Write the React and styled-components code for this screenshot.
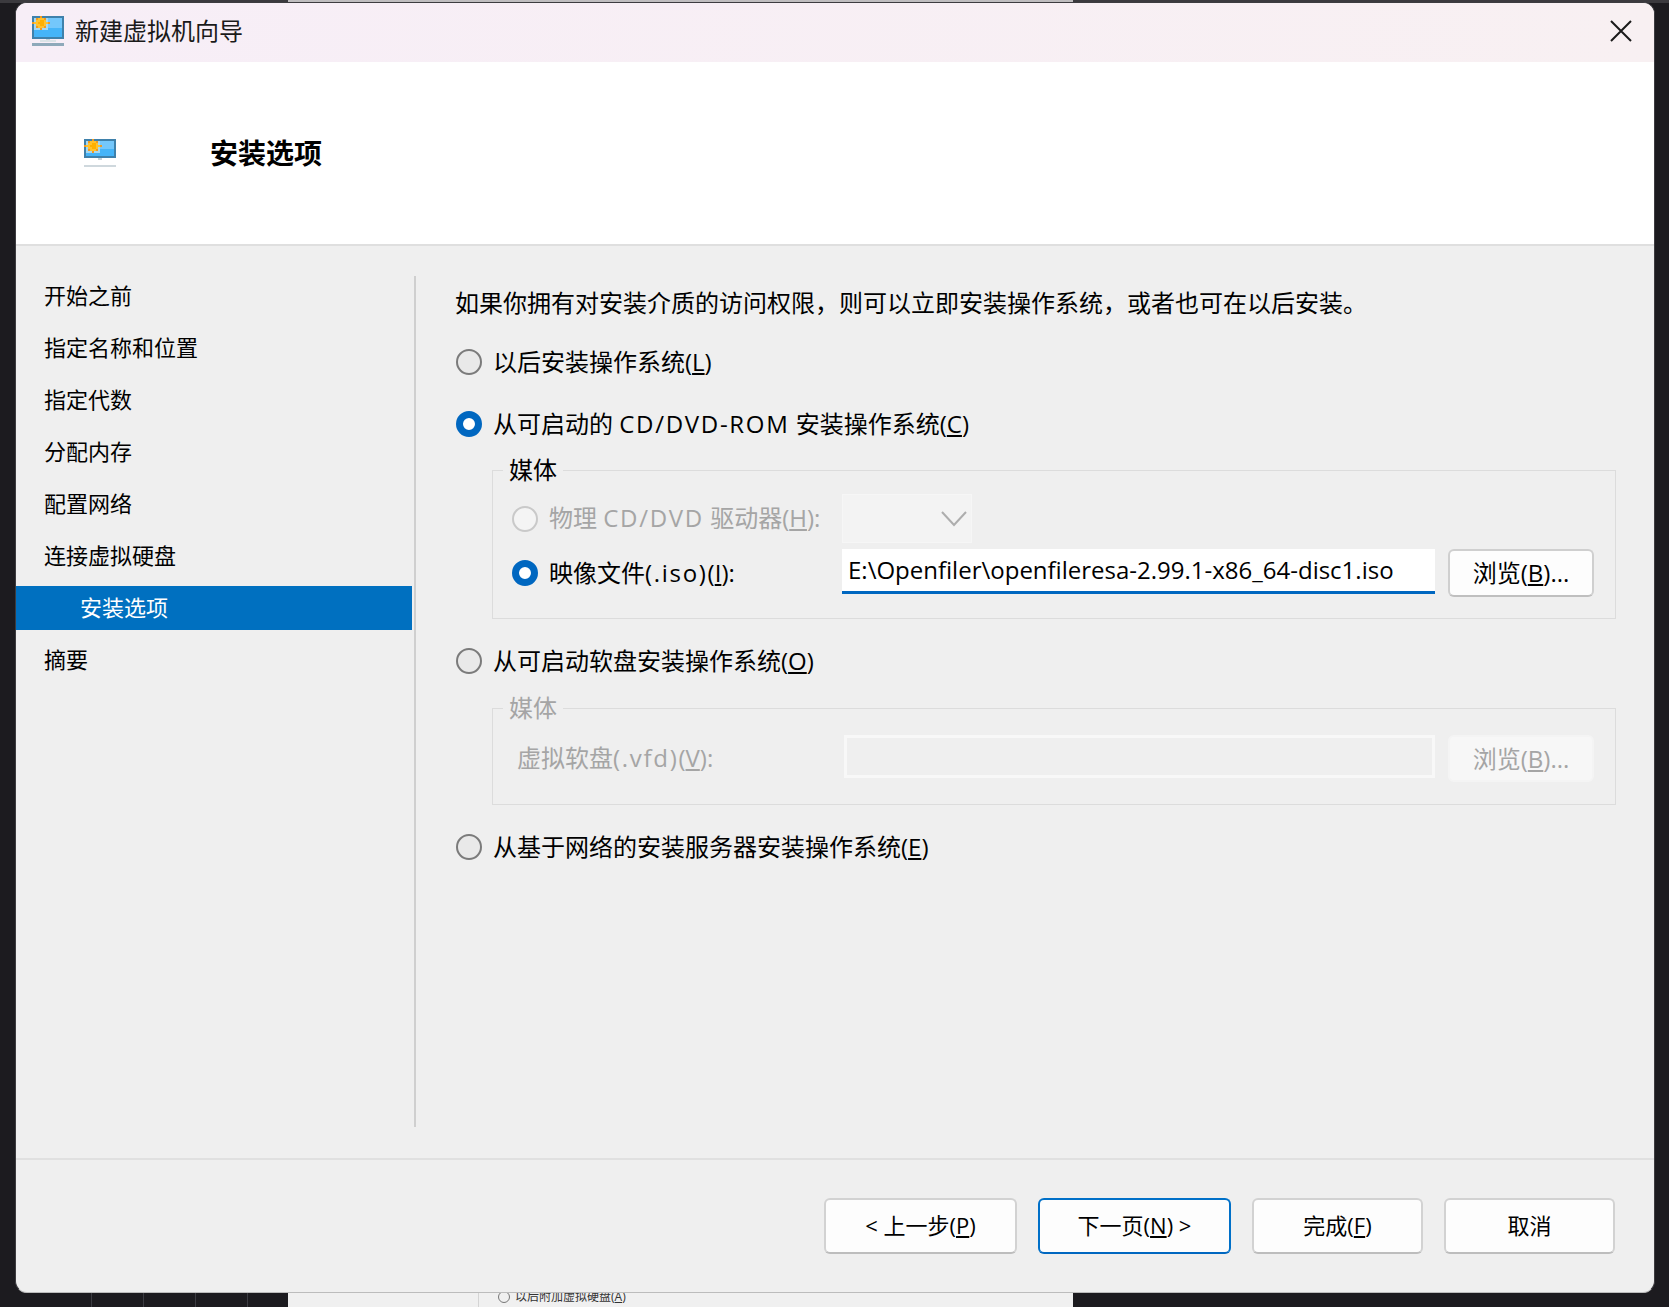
import React from "react";
import styled, { createGlobalStyle } from "styled-components";

const FONT = `"Open Sans", "Noto Sans CJK SC", sans-serif`;
const BLUE = "#0067c0";

const GlobalStyle = createGlobalStyle`
  html, body {
    margin: 0;
    padding: 0;
    background: #1c1b1f;
  }
  * {
    box-sizing: border-box;
  }
`;

const Page = styled.div`
  position: relative;
  width: 1669px;
  height: 1307px;
  overflow: hidden;
  background: #1c1b1f;
  font-family: ${FONT};
  color: #000;
`;

// what shows around the dialog: the desktop and the window behind it
const BehindTop = styled.div`
  position: absolute;
  top: 0;
  left: 0;
  right: 0;
  height: 3px;
  background: linear-gradient(
    to right,
    #3b3a3e 0,
    #3b3a3e 288px,
    #bfbdbf 288px,
    #bfbdbf 1073px,
    #3b3a3e 1073px
  );
`;

const BehindBottom = styled.div`
  position: absolute;
  left: 288px;
  top: 1293px;
  width: 785px;
  height: 14px;
  background: #f0f0f0;
  overflow: hidden;
`;

const BehindLine = styled.div`
  position: absolute;
  top: 0;
  left: 190px;
  width: 1px;
  height: 14px;
  background: #d4d4d4;
`;

const BehindOption = styled.div`
  position: absolute;
  top: -2px;
  left: 210px;
  display: flex;
  align-items: center;
  gap: 5px;
  font-size: 12px;
  line-height: 12px;
  color: #333;
`;

const BehindRadio = styled.span`
  width: 12px;
  height: 12px;
  border: 1px solid #777;
  border-radius: 50%;
`;

const GridLine = styled.div`
  position: absolute;
  left: ${(p) => p.$x}px;
  top: 1293px;
  width: 1px;
  height: 14px;
  background: #3c3c42;
`;

const Window = styled.div`
  position: relative;
  margin: 2px 0 0 15px;
  width: 1640px;
  height: 1291px;
  display: flex;
  flex-direction: column;
  border: 1px solid #3d3c40;
  border-bottom-color: #bcbcbc;
  border-radius: 12px;
  overflow: hidden;
  background: #efefef;
`;

const TitleBar = styled.div`
  height: 59px;
  flex: none;
  display: flex;
  align-items: center;
  padding: 0 22px 3px 16px;
  background: linear-gradient(to right, #f7eef7, #f8f0f2);
`;

const TitleText = styled.span`
  margin-left: 11px;
  font-size: 24px;
  line-height: 36px;
  color: #1a1a1a;
`;

const CloseButton = styled.div`
  margin-left: auto;
  display: flex;
`;

const Banner = styled.div`
  height: 184px;
  flex: none;
  display: flex;
  align-items: center;
  padding-left: 68px;
  background: #fff;
  border-bottom: 2px solid #dfdfdf;
`;

const BannerTitle = styled.h1`
  margin: 0 0 0 94px;
  font-size: 28px;
  line-height: 40px;
  font-weight: 700;
`;

const Body = styled.div`
  flex: 1;
  display: flex;
  min-height: 0;
`;

const Sidebar = styled.ul`
  width: 396px;
  flex: none;
  margin: 0;
  padding: 28px 0 0;
  list-style: none;
  display: flex;
  flex-direction: column;
  gap: 8px;
`;

const Step = styled.li`
  height: 44px;
  display: flex;
  align-items: center;
  padding-left: ${(p) => (p.$active ? 64 : 28)}px;
  padding-bottom: 4px;
  font-size: 22px;
  background: ${(p) => (p.$active ? "#0070c0" : "transparent")};
  color: ${(p) => (p.$active ? "#fff" : "#000")};
`;

const VLine = styled.div`
  width: 2px;
  flex: none;
  margin: 30px 0 31px 2px;
  background: #cfcfcf;
`;

const Content = styled.div`
  flex: none;
  width: 1161px;
  margin-left: 39px;
  padding-top: 39px;
`;

const Intro = styled.p`
  margin: 0;
  height: 36px;
  font-size: 24px;
  line-height: 36px;
`;

const Option = styled.label`
  display: flex;
  align-items: center;
  height: 36px;
  margin-top: ${(p) => p.$top}px;
  margin-left: ${(p) => p.$left || 0}px;
  font-size: 24px;
  color: ${(p) => (p.$disabled ? "#a5a5a5" : "#000")};
  white-space: pre;
`;

const Caption = styled.span`
  margin-bottom: 4px;
`;

const Latin = styled.span`
  letter-spacing: 1.7px;
`;

const Radio = styled.span`
  width: 26px;
  height: 26px;
  flex: none;
  margin-left: 1px;
  margin-right: 11px;
  border-radius: 50%;
  background: ${(p) =>
    p.$checked ? "#fff" : p.$disabled ? "#f4f4f4" : "#e9e9e9"};
  border: ${(p) =>
    p.$checked
      ? `7px solid ${BLUE}`
      : p.$disabled
      ? "2px solid #c9c9c9"
      : "2px solid #7b7b7b"};
`;

const Group = styled.div`
  position: relative;
  margin-top: ${(p) => p.$top}px;
  margin-left: 37px;
  width: 1124px;
  height: ${(p) => p.$height}px;
  padding: ${(p) => p.$pad}px 20px 0 0;
  border: 1px solid #dcdcdc;
`;

const Legend = styled.span`
  position: absolute;
  top: -19px;
  left: 10px;
  padding: 0 6px;
  font-size: 24px;
  line-height: 36px;
  background: #efefef;
  color: ${(p) => (p.$disabled ? "#a5a5a5" : "#000")};
`;

const FieldRow = styled.div`
  display: flex;
  align-items: center;
  height: ${(p) => p.$height}px;
  margin-bottom: ${(p) => p.$bottom || 0}px;
`;

const FieldLabel = styled(Option)`
  width: ${(p) => p.$width}px;
  flex: none;
  margin-top: 0;
`;

const Combo = styled.div`
  width: 130px;
  height: 49px;
  display: flex;
  align-items: center;
  justify-content: flex-end;
  padding-right: 3px;
  background: #f3f3f3;
  border: 1px solid #f6f6f6;
`;

const PathInput = styled.input`
  width: 593px;
  height: 45px;
  flex: none;
  padding: 0 0 2px 6px;
  border: 0;
  border-bottom: 3px solid ${BLUE};
  border-radius: 0;
  outline: none;
  background: #fff;
  font-family: ${FONT};
  font-size: 24px;
  color: #000;
  align-self: flex-start;
`;

const DisabledInput = styled.div`
  width: 591px;
  height: 43px;
  margin-left: 1px;
  flex: none;
  background: #efefef;
  border: 3px solid #f8f8f8;
  align-self: flex-start;
`;

const BrowseButton = styled.button`
  width: 146px;
  height: ${(p) => (p.disabled ? 47 : 48)}px;
  margin-left: 13px;
  flex: none;
  padding: 0 0 3px;
  align-self: flex-start;
  border: 2px solid ${(p) => (p.disabled ? "#f4f4f4" : "#cfcfcf")};
  border-bottom-color: ${(p) => (p.disabled ? "#f4f4f4" : "#bfbfbf")};
  border-radius: 6px;
  background: ${(p) => (p.disabled ? "#f7f7f7" : "#fdfdfd")};
  color: ${(p) => (p.disabled ? "#a5a5a5" : "#000")};
  font-family: ${FONT};
  font-size: 24px;
`;

const Footer = styled.div`
  height: 134px;
  flex: none;
  display: flex;
  align-items: flex-start;
  justify-content: flex-end;
  gap: 21px;
  padding: 38px 39px 0 0;
  border-top: 2px solid #e0e0e0;
`;

const WizardButton = styled.button`
  width: ${(p) => p.$width}px;
  height: 56px;
  padding: 0 0 4px;
  border: 2px solid ${(p) => (p.$primary ? "#0070c8" : "#d2d2d2")};
  border-bottom-color: ${(p) => (p.$primary ? "#0067c0" : "#bdbdbd")};
  border-radius: 6px;
  background: #fdfdfd;
  color: #000;
  font-family: ${FONT};
  font-size: 22px;
`;

// the sun of the monitor icon, in 2px cells: o orange, y yellow, c core
const SUN = [
  "....o....",
  "..oyyyo..",
  "..yyccy..",
  "oyycccyyo",
  "..yyccy..",
  "..oyyyo..",
  "....o....",
];
const SUN_COLORS = { o: "#f29a1f", y: "#ffc22e", c: "#ffb000" };

// pixel-like monitor icon, used in the title bar and the banner
const MonitorIcon = ({ tall }) => {
  const frame = tall ? 23 : 19;
  return (
    <svg
      width="32"
      height={tall ? 30 : 28}
      viewBox={tall ? "0 0 32 30" : "0 0 32 28"}
      shapeRendering="crispEdges"
    >
      <rect width="32" height={frame} fill="#3f81ab" />
      <rect x="2" y="2" width="28" height={frame - 4} fill="#45b4f8" />
      <rect x="14" y="2" width="16" height={frame / 2 - 2} fill="#74c7fb" />
      <rect x="2" y="2" width="14" height="12" fill="#a5d8f2" />
      {SUN.map((row, y) =>
        row
          .split("")
          .map((cell, x) =>
            cell === "." ? null : (
              <rect
                key={`${x}-${y}`}
                x={x * 2}
                y={y * 2}
                width="2"
                height="2"
                fill={SUN_COLORS[cell]}
              />
            )
          )
      )}
      <rect x="14" y={frame} width="4" height={tall ? 3 : 2} fill="#c5d2d9" />
      {tall && <rect x="8" y="24" width="16" height="2" fill="#dbe3e7" />}
      <rect
        y={tall ? 27 : 26}
        width="32"
        height={tall ? 3 : 2}
        fill={tall ? "#8ea9ba" : "#cfd8dd"}
      />
    </svg>
  );
};

const CloseIcon = () => (
  <svg width="22" height="22" viewBox="0 0 22 22">
    <path d="M1 1 21 21M21 1 1 21" stroke="#1a1a1a" strokeWidth="2" fill="none" />
  </svg>
);

const Chevron = () => (
  <svg width="28" height="18" viewBox="0 0 28 18">
    <path d="M2 2 14 15 26 2" stroke="#adadad" strokeWidth="2" fill="none" />
  </svg>
);

const steps = ["开始之前", "指定名称和位置", "指定代数", "分配内存", "配置网络", "连接虚拟硬盘", "安装选项", "摘要"];

const App = () => (
  <Page>
    <GlobalStyle />
    <BehindTop />
    {[91, 143, 195, 247].map((x) => (
      <GridLine key={x} $x={x} />
    ))}
    <BehindBottom>
      <BehindLine />
      <BehindOption>
        <BehindRadio />
        <span>
          以后附加虚拟硬盘(<u>A</u>)
        </span>
      </BehindOption>
    </BehindBottom>

    <Window>
      <TitleBar>
        <MonitorIcon tall />
        <TitleText>新建虚拟机向导</TitleText>
        <CloseButton>
          <CloseIcon />
        </CloseButton>
      </TitleBar>

      <Banner>
        <MonitorIcon />
        <BannerTitle>安装选项</BannerTitle>
      </Banner>

      <Body>
        <Sidebar>
          {steps.map((s) => (
            <Step key={s} $active={s === "安装选项"}>
              {s}
            </Step>
          ))}
        </Sidebar>
        <VLine />
        <Content>
          <Intro>如果你拥有对安装介质的访问权限，则可以立即安装操作系统，或者也可在以后安装。</Intro>

          <Option $top={23}>
            <Radio />
            <Caption>
              以后安装操作系统(<u>L</u>)
            </Caption>
          </Option>
          <Option $top={26}>
            <Radio $checked />
            <Caption>
              从可启动的 <Latin>CD/DVD-ROM</Latin> 安装操作系统(<u>C</u>)
            </Caption>
          </Option>

          <Group $top={28} $height={149} $pad={23}>
            <Legend>媒体</Legend>
            <FieldRow $height={49} $bottom={6}>
              <FieldLabel $width={331} $left={18} $disabled>
                <Radio $disabled />
                <Caption>
                  物理 <Latin>CD/DVD</Latin> 驱动器(<u>H</u>):
                </Caption>
              </FieldLabel>
              <Combo>
                <Chevron />
              </Combo>
            </FieldRow>
            <FieldRow $height={48}>
              <FieldLabel $width={331} $left={18}>
                <Radio $checked />
                <Caption>
                  映像文件<Latin>(.iso)</Latin>(<u>I</u>):
                </Caption>
              </FieldLabel>
              <PathInput readOnly value="E:\Openfiler\openfileresa-2.99.1-x86_64-disc1.iso" />
              <BrowseButton>
                浏览(<u>B</u>)...
              </BrowseButton>
            </FieldRow>
          </Group>

          <Option $top={24}>
            <Radio />
            <Caption>
              从可启动软盘安装操作系统(<u>O</u>)
            </Caption>
          </Option>

          <Group $top={29} $height={97} $pad={26}>
            <Legend $disabled>媒体</Legend>
            <FieldRow $height={47}>
              <FieldLabel $width={326} $left={24} $disabled>
                <Caption>
                  虚拟软盘<Latin>(.vfd)</Latin>(<u>V</u>):
                </Caption>
              </FieldLabel>
              <DisabledInput />
              <BrowseButton disabled>
                浏览(<u>B</u>)...
              </BrowseButton>
            </FieldRow>
          </Group>

          <Option $top={24}>
            <Radio />
            <Caption>
              从基于网络的安装服务器安装操作系统(<u>E</u>)
            </Caption>
          </Option>
        </Content>
      </Body>

      <Footer>
        <WizardButton $width={193}>
          &lt; 上一步(<u>P</u>)
        </WizardButton>
        <WizardButton $width={193} $primary>
          下一页(<u>N</u>) &gt;
        </WizardButton>
        <WizardButton $width={171}>
          完成(<u>F</u>)
        </WizardButton>
        <WizardButton $width={171}>取消</WizardButton>
      </Footer>
    </Window>
  </Page>
);

export default App;
